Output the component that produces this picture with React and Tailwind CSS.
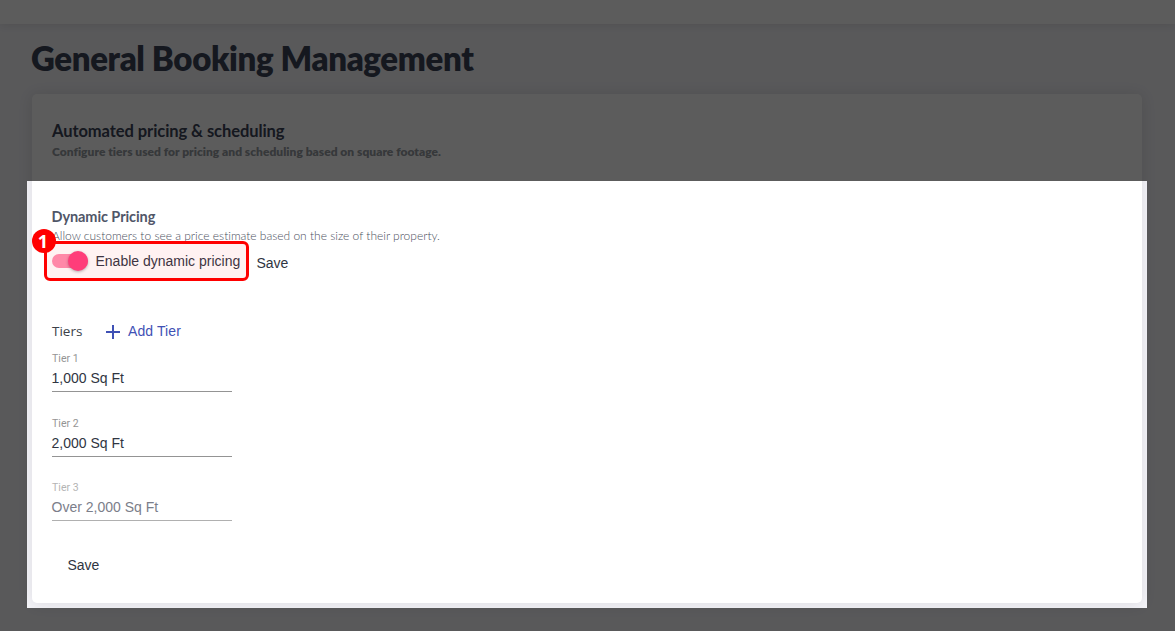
import React from "react";

function Field({ label, value, muted, gap }) {
  return (
    <div className={`w-[180px] border-b ${muted ? "border-[#b0b0b0]" : "border-[#949494]"} ${gap}`}>
      <div className={`h-3 pt-px font-['Roboto',sans-serif] text-[10.5px] leading-3 tracking-[0.05px] ${muted ? "text-[#b4b4b4]" : "text-[#949494]"}`}>{label}</div>
      <div className={`mt-1.5 -ml-[0.5px] h-[21px] font-['Liberation_Sans',sans-serif] text-[14px] leading-4 ${muted ? "text-[#7b7e8a]" : "text-[#2f3542]"}`}>{value}</div>
    </div>
  );
}

export default function App() {
  return (
    <div className="relative flex h-[631px] w-[1175px] flex-col overflow-hidden bg-[#f6f6fa] font-['Lato',sans-serif]">
      <header className="h-6 shrink-0 bg-white shadow-[0_1px_10px_rgba(69,65,78,0.14)]" />
      <main className="flex flex-col pl-8">
        <h1 className="mt-3.5 -ml-px h-10 whitespace-nowrap text-[33px] leading-10 font-extrabold tracking-[-0.36px] text-[#3b4358]">General Booking Management</h1>
        <section className="mt-4 flex h-[509px] w-[1110px] flex-col rounded-[5px] bg-white px-5 shadow-[0_1px_15px_1px_rgba(69,65,78,0.14)]">
          <h2 className="mt-[27px] h-5 text-[16.5px] leading-5 font-bold tracking-[-0.07px] text-[#3b4358]">Automated pricing &amp; scheduling</h2>
          <p className="mt-[3px] h-4 text-[12px] leading-4 font-extrabold tracking-[0.02px] text-[#959ba2]">Configure tiers used for pricing and scheduling based on square footage.</p>
          <h3 className="mt-[47px] -ml-[0.5px] h-5 text-[14.5px] leading-5 font-bold tracking-[-0.08px] text-[#505668]">Dynamic Pricing</h3>
          <p className="mt-px h-4 text-[12px] leading-4 font-light tracking-[-0.01px] text-[#4c5060]">Allow customers to see a price estimate based on the size of their property.</p>
          <div className="mt-[7px] flex h-5 items-center font-['Liberation_Sans',sans-serif] text-[14px]">
            <span className="flex h-5 w-9 shrink-0 items-center">
              <span className="flex h-3.5 w-9 items-center justify-end rounded-full bg-[#ff8fb1]">
                <span className="size-5 shrink-0 rounded-full bg-[#ff4081] shadow-[0_1px_3px_rgba(0,0,0,0.3)]" />
              </span>
            </span>
            <span className="ml-[7.5px] w-[145px] whitespace-nowrap text-[#343746]">Enable dynamic pricing</span>
            <span className="mt-1 ml-4 text-[#2f3542]">Save</span>
          </div>
          <div className="mt-[50px] flex h-5 items-center text-[14px]">
            <span className="w-[54px] font-['Open_Sans',sans-serif] text-[13.5px] text-[#3c3f49]">Tiers</span>
            <svg className="mt-px h-3.5 w-3.5" viewBox="0 0 14 14" fill="none" stroke="#3f51b5" strokeWidth="2"><path d="M7 0v14M0 7h14" /></svg>
            <span className="ml-2 font-['Liberation_Sans',sans-serif] tracking-[0.1px] text-[#3f51b5]">Add Tier</span>
          </div>
          <Field label="Tier 1" value="1,000 Sq Ft" gap="mt-[11px]" />
          <Field label="Tier 2" value="2,000 Sq Ft" gap="mt-[25px]" />
          <Field label="Tier 3" value="Over 2,000 Sq Ft" muted gap="mt-[24px]" />
          <div className="mt-[34px] ml-[15.5px] h-5 font-['Liberation_Sans',sans-serif] text-[14px] leading-5 text-[#2f3542]">Save</div>
        </section>
      </main>
      <div className="absolute top-[181px] left-[27px] h-[427px] w-[1120px] shadow-[0_0_0_1200px_rgba(0,0,0,0.64)]" />
      <div className="absolute top-[241px] left-11 h-10 w-[205px] rounded-[6px] border-3 border-[#ff0000] bg-[#ff0000]/5" />
      <div className="absolute top-[229px] left-8 flex size-6 items-center justify-center rounded-full bg-[#ff0000] pr-0.5 font-['Open_Sans',sans-serif] text-[18px] leading-none font-bold text-white">1</div>
    </div>
  );
}
